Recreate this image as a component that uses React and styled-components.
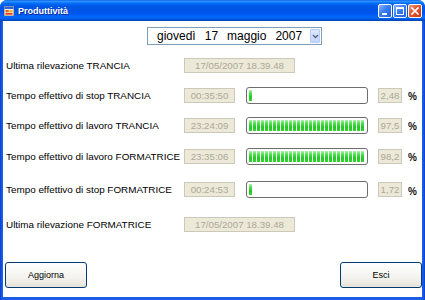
import React from "react";
import styled, { createGlobalStyle } from "styled-components";

const GlobalStyle = createGlobalStyle`
  html, body {
    margin: 0;
    padding: 0;
    background: #ffffff;
  }
  body {
    font-family: "Liberation Sans", Arial, sans-serif;
  }
`;

const rows = [
  { label: "Ultima rilevazione TRANCIA", stamp: "17/05/2007 18.39.48", h: 29 },
  { label: "Tempo effettivo di stop TRANCIA", time: "00:35:50", pct: 2.48, h: 30 },
  { label: "Tempo effettivo di lavoro TRANCIA", time: "23:24:09", pct: 97.5, h: 30 },
  { label: "Tempo effettivo di lavoro FORMATRICE", time: "23:35:06", pct: 98.2, h: 32 },
  { label: "Tempo effettivo di stop FORMATRICE", time: "00:24:53", pct: 1.72, h: 35 },
  { label: "Ultima rilevazione FORMATRICE", stamp: "17/05/2007 18.39.48", h: 35 },
];

const segWidth = (pct) => {
  const n = Math.max(1, Math.ceil(((pct / 100) * 116) / 4));
  return Math.min(116, n * 4 - 1);
};

const App = () => {
  return (
    <>
      <GlobalStyle />
      <Window>
        <TitleBar>
          <AppIcon width="10" height="10" viewBox="0 0 9 9">
            <rect x="0" y="0" width="9" height="9" fill="#f6f3e8" stroke="#7a6a4a" strokeWidth="0.8" />
            <rect x="0.5" y="0.5" width="8" height="2.2" fill="#2f63d8" />
            <rect x="1.3" y="3.6" width="3" height="2" fill="#e8641c" />
            <rect x="4.8" y="3.6" width="3" height="2" fill="#f3b61d" />
            <rect x="1.3" y="6.2" width="6.4" height="1.6" fill="#d9371e" />
          </AppIcon>
          <Title>Produttività</Title>
          <Controls>
            <CtrlButton>
              <svg width="12" height="12" viewBox="0 0 12 12">
                <rect x="3" y="8" width="5" height="2" fill="#fff" />
              </svg>
            </CtrlButton>
            <CtrlButton>
              <svg width="12" height="12" viewBox="0 0 12 12">
                <rect x="2.5" y="2.5" width="7" height="7" fill="none" stroke="#fff" strokeWidth="1" />
                <rect x="2.5" y="2.5" width="7" height="1.6" fill="#fff" />
              </svg>
            </CtrlButton>
            <CtrlButton $close>
              <svg width="12" height="12" viewBox="0 0 12 12">
                <path d="M3 3 L9 9 M9 3 L3 9" stroke="#fff" strokeWidth="1.7" strokeLinecap="square" />
              </svg>
            </CtrlButton>
          </Controls>
        </TitleBar>

        <Client>
          <DateRow>
            <DateBox>
              <DateText>
                <span>giovedì</span>
                <span>17</span>
                <span>maggio</span>
                <span>2007</span>
              </DateText>
              <DropButton>
                <svg width="7" height="5" viewBox="0 0 7 5">
                  <path d="M1 1 L3.5 3.5 L6 1" fill="none" stroke="#4d6185" strokeWidth="1.3" />
                </svg>
              </DropButton>
            </DateBox>
          </DateRow>

          {rows.map((r) => (
            <Row key={r.label} $h={r.h}>
              <Label>{r.label}</Label>
              {r.stamp ? (
                <Field $w={111}>{r.stamp}</Field>
              ) : (
                <>
                  <Field $w={51}>{r.time}</Field>
                  <Bar>
                    <Fill style={{ width: segWidth(r.pct) }} />
                  </Bar>
                  <PctField $w={24}>{String(r.pct).replace(".", ",")}</PctField>
                  <PctSign>%</PctSign>
                </>
              )}
            </Row>
          ))}

          <ButtonRow>
            <Button>Aggiorna</Button>
            <Button>Esci</Button>
          </ButtonRow>
        </Client>
      </Window>
    </>
  );
};

export default App;

const Window = styled.div`
  width: 425px;
  height: 300px;
  box-sizing: border-box;
  display: flex;
  flex-direction: column;
  padding: 0 3px 3px;
  background: linear-gradient(to right, #0a3fcf 0, #1a5ee8 2px, #1a5ee8 calc(100% - 2px), #0a3fcf 100%);
  border-radius: 7px 7px 0 0;
  overflow: hidden;
`;

const TitleBar = styled.div`
  height: 21px;
  margin: 0 -3px;
  padding: 0 3px 0 4px;
  display: flex;
  align-items: center;
  background: linear-gradient(
    to bottom,
    #0058ee 0%,
    #3593ff 5%,
    #288eff 8%,
    #127dff 12%,
    #036ffc 16%,
    #0262ee 22%,
    #0057e5 30%,
    #0054e3 40%,
    #0055eb 60%,
    #005bf5 70%,
    #026afe 80%,
    #0062ef 88%,
    #0052d6 94%,
    #0040ab 100%
  );
`;

const AppIcon = styled.svg`
  flex: none;
  margin-top: 1px;
`;

const Title = styled.div`
  margin-left: 4px;
  color: #ffffff;
  font-family: "Liberation Sans", Arial, sans-serif;
  font-weight: 700;
  font-size: 9px;
  text-shadow: 1px 1px 0 #0a2f9c;
`;

const Controls = styled.div`
  margin-left: auto;
  display: flex;
  gap: 1px;
`;

const CtrlButton = styled.div`
  width: 14px;
  height: 14px;
  box-sizing: border-box;
  border: 1px solid #ffffff;
  border-radius: 2px;
  display: flex;
  align-items: center;
  justify-content: center;
  background: ${(p) =>
    p.$close
      ? "linear-gradient(135deg, #f29a7c 0%, #e2572f 45%, #c8391a 100%)"
      : "linear-gradient(135deg, #8cb4fa 0%, #3a7ef3 45%, #2360dc 100%)"};
`;

const Client = styled.div`
  flex: 1;
  background: #ffffff;
  display: flex;
  flex-direction: column;
`;

const DateRow = styled.div`
  display: flex;
  padding: 6px 0 0 144px;
  margin-bottom: 6px;
`;

const DateBox = styled.div`
  width: 175px;
  height: 18px;
  box-sizing: border-box;
  border: 1px solid #7f9db9;
  background: #ffffff;
  display: flex;
  align-items: center;
  padding: 0 1px 0 9px;
`;

const DateText = styled.div`
  display: flex;
  gap: 9px;
  font-size: 12px;
  color: #000000;
`;

const DropButton = styled.div`
  margin-left: auto;
  width: 10px;
  height: 14px;
  border-radius: 1px;
  background: linear-gradient(to bottom, #dde8fd, #c2d4f9);
  border: 1px solid #b9ccf3;
  box-sizing: border-box;
  display: flex;
  align-items: center;
  justify-content: center;
`;

const Row = styled.div`
  height: ${(p) => p.$h}px;
  display: flex;
  align-items: center;
  padding-left: 3px;
`;

const Label = styled.div`
  width: 178px;
  flex: none;
  font-size: 9.9px;
  color: #000000;
  white-space: nowrap;
`;

const Field = styled.div`
  width: ${(p) => p.$w}px;
  height: 15px;
  flex: none;
  box-sizing: border-box;
  border: 1px solid #cdc9b9;
  background: #ece9d8;
  color: #aca899;
  font-size: 9.7px;
  line-height: 13px;
  text-align: center;
  white-space: nowrap;
  overflow: hidden;
`;

const PctField = styled(Field)`
  margin-left: 10px;
`;

const Bar = styled.div`
  margin-left: 11px;
  width: 122px;
  height: 17px;
  flex: none;
  box-sizing: border-box;
  border: 1px solid #6e6e6e;
  border-radius: 3px;
  padding: 2px;
  background: #ffffff;
`;

const Fill = styled.div`
  height: 100%;
  background:
    repeating-linear-gradient(to right, transparent 0 3px, #ffffff 3px 4px),
    linear-gradient(to bottom, #b4f2b4 0%, #4fe04f 30%, #22c822 65%, #34d434 100%);
`;

const PctSign = styled.div`
  margin-left: 6px;
  margin-top: 3px;
  font-size: 10px;
  font-weight: 700;
  color: #111111;
`;

const ButtonRow = styled.div`
  margin-top: auto;
  display: flex;
  justify-content: space-between;
  padding: 0 0 9px 2px;
`;

const Button = styled.div`
  width: 82px;
  height: 26px;
  box-sizing: border-box;
  border: 1px solid #003c74;
  border-radius: 3px;
  background: linear-gradient(to bottom, #ffffff 0%, #f4f3ee 60%, #e6e3d8 100%);
  display: flex;
  align-items: center;
  justify-content: center;
  font-size: 9px;
  color: #000000;
`;
